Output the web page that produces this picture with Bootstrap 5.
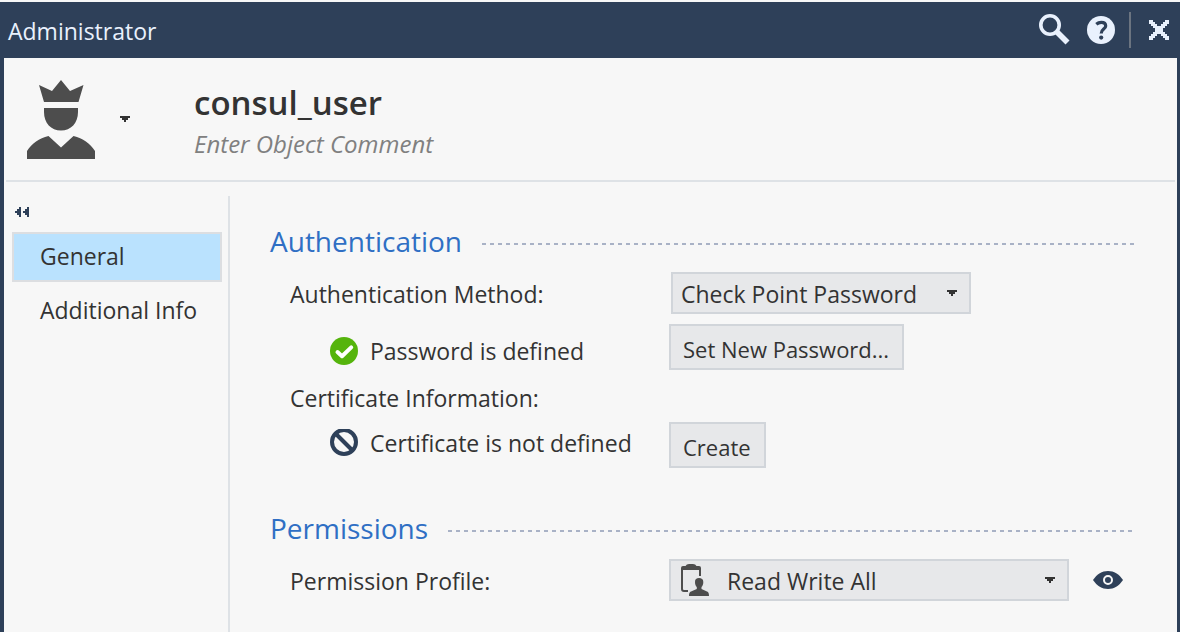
<!DOCTYPE html>
<html lang="en">
<head>
<meta charset="utf-8">
<meta name="viewport" content="width=device-width, initial-scale=1">
<title>Administrator</title>
<link rel="stylesheet" href="https://cdn.jsdelivr.net/npm/bootstrap@5.3.0/dist/css/bootstrap.min.css">
<style>
  :root { --navy: #2e4059; --ink: #333; --line: #dee2e6; --edge: #d1d5da; --surface: #f7f7f7; --field: #e7e8ea; }
  body { font-family: "Open Sans", "Noto Sans", sans-serif; font-size: 23px; line-height: 32px; color: var(--ink); background: var(--surface); }
  .dialog-frame { border: solid var(--navy); border-width: 0 3px 0 4px; margin-top: 2px; min-height: calc(100vh - 2px); }
  .title-bar { background: var(--navy); color: #e9f1fd; height: 56px; padding: 0 8px 0 4px; }
  .title-bar h1 { font-size: 23px; line-height: 32px; font-weight: 400; padding-top: 2px; }
  .title-bar .divider { width: 2px; height: 36px; background: #6b7480; margin: 0 18px 0 14px; }
  .bare { border: 0; padding: 0; background: none; color: inherit; display: flex; }
  svg { display: block; }
  .object-header { height: 122px; padding-left: 23px; }
  .object-header .fields { margin-left: 63px; padding-top: 4px; }
  .object-header input { display: block; width: 100%; border: 0; padding: 0; background: none; outline: 0; color: var(--ink); }
  .object-name { font-size: 33px; line-height: 46px; font-weight: 600; }
  .object-comment { font-size: 24px; line-height: 36px; font-style: italic; }
  .object-comment::placeholder { color: #808080; opacity: 1; }
  .rule { height: 2px; background: var(--line); margin: 0 2px; }
  .dialog-body { padding-top: 14px; }
  .sidebar { width: 226px; padding: 11px 6px 0 8px; border-right: 2px solid var(--line); }
  .sidebar .collapse-btn { margin: 0 0 15px 3px; }
  .sidebar .nav-link { height: 50px; padding: 0 26px 2px; border: 2px solid transparent; border-radius: 0; color: var(--ink); display: flex; align-items: center; margin-bottom: 4px; white-space: nowrap; }
  .sidebar .nav-link.active { background: #bae2fe; border-color: #dcdee1; color: var(--ink); }
  .content { padding: 26px 42px 31px 40px; min-width: 0; }
  .section-title { gap: 20px; margin-bottom: 10px; }
  .section-title h2 { font-size: 28px; line-height: 38px; padding-bottom: 2px; font-weight: 400; color: #2f6fc4; }
  .section-next { margin-top: 41px; }
  .dashes { height: 2px; margin-top: 3px; background: repeating-linear-gradient(90deg, #a9b2c6 0 4px, transparent 4px 8px); }
  .form-grid { display: grid; grid-template-columns: 379px minmax(0, 1fr); margin-left: 20px; align-items: center; }
  .form-grid label { padding-top: 2px; }
  .password-row { margin: 10px 0 12px 20px; }
  .status { padding-left: 40px; gap: 12px; }
  .flat, .form-select.flat { background-color: var(--field); border: 2px solid var(--edge); border-radius: 0; font-size: 23px; line-height: 32px; color: var(--ink); }
  .btn.flat { height: 46px; padding: 4px 13px 0 12px; font-size: 22px; white-space: nowrap; }
  .form-select.flat { height: 42px; padding: 2px 32px 0 8px;
    background-image: url("data:image/svg+xml,%3Csvg xmlns='http://www.w3.org/2000/svg' viewBox='0 0 10 6'%3E%3Cpath d='M0 0h10v2H8v2H6v2H4V4H2V2H0z' fill='%23333'/%3E%3C/svg%3E");
    background-size: 10px 6px; background-position: right 12px center; }
  .method { width: 300px; margin-left: 2px; }
  .profile { width: 400px; }
  .form-select.profile { padding-left: 56px; }
  .profile-icon { position: absolute; left: 12px; top: 5px; pointer-events: none; }
</style>
</head>
<body>
<div class="dialog-frame d-flex flex-column">
  <header class="title-bar d-flex align-items-center">
    <h1 class="mb-0 me-auto">Administrator</h1>
    <button class="bare" type="button" aria-label="Search">
      <svg width="32" height="32" viewBox="0 0 32 32" fill="none" stroke="#e9f1fd"><circle cx="11" cy="11" r="9.2" stroke-width="3.6"/><path d="M17.500 17.500L28.500 28.500" stroke-width="5.6"/></svg>
    </button>
    <button class="bare ms-3" type="button" aria-label="Help">
      <svg width="28" height="28" viewBox="0 0 28 28"><circle cx="14" cy="14" r="14" fill="#e9f1fd"/><path d="M9.3 8.2C11 6.7 12.6 6.3 14.3 6.3C17 6.3 18.7 7.6 18.7 9.9C18.7 13.1 14.2 13.2 14.2 17.4" fill="none" stroke="#2e4059" stroke-width="3.2"/><circle cx="14.2" cy="21.6" r="2.1" fill="#2e4059"/></svg>
    </button>
    <span class="divider"></span>
    <button class="bare" type="button" aria-label="Close">
      <svg width="20" height="20" viewBox="0 0 20 20" fill="#e9f1fd" shape-rendering="crispEdges"><path d="M0 0h4v2h2v2h2v2h4V4h2V2h2V0h4v4h-2v2h-2v2h-2v4h2v2h2v2h2v4h-4v-2h-2v-2h-2v-2H8v2H6v2H4v2H0v-4h2v-2h2v-2h2V8H4V6H2V4H0z"/></svg>
    </button>
  </header>

  <section class="object-header d-flex align-items-center">
    <svg width="68" height="80" viewBox="0 0 68 80" fill="#4d4d4d"><path d="M12 6L25 12L34 1L43 12L56.500 6L51.500 23H17zM17 29H51V33C51 44 44 51.500 34 51.500S17 44 17 33zM21.500 57L34 68.500L46.500 57C56 59.500 63 64 68 72V80H0V72C5 64 12 59.500 21.500 57z"/></svg>
    <button class="bare ms-4" type="button" aria-label="Change icon">
      <svg width="12" height="6" viewBox="0 0 12 6" fill="#333" shape-rendering="crispEdges"><path d="M1 0h10v2H9v2H7v2H5V4H3V2H1z"/></svg>
    </button>
    <div class="fields flex-grow-1">
      <input class="object-name" type="text" value="consul_user" aria-label="Object name">
      <input class="object-comment" type="text" placeholder="Enter Object Comment" aria-label="Object comment">
    </div>
  </section>
  <div class="rule"></div>

  <div class="dialog-body d-flex flex-grow-1">
    <nav class="sidebar flex-shrink-0" aria-label="Pages">
      <button class="bare collapse-btn" type="button" aria-label="Collapse">
        <svg width="14" height="10" viewBox="0 0 14 10" fill="#2e4059" shape-rendering="crispEdges"><path d="M6 0v10H4V8H2V6H0V4h2V2h2V0zM14 0v10h-2V8h-2V6H8V4h2V2h2V0z"/></svg>
      </button>
      <a class="nav-link active" href="#general" aria-current="page">General</a>
      <a class="nav-link" href="#additional">Additional Info</a>
    </nav>

    <main class="content flex-grow-1">
      <div class="section-title d-flex align-items-center">
        <h2 class="mb-0">Authentication</h2>
        <span class="dashes flex-grow-1"></span>
      </div>
      <div class="form-grid">
        <label for="method">Authentication Method:</label>
        <div><select class="form-select flat method" id="method"><option>Check Point Password</option></select></div>
      </div>
      <div class="form-grid password-row">
        <div class="status d-flex align-items-center pt-2">
          <svg width="28" height="28" viewBox="0 0 28 28"><circle cx="14" cy="14" r="14" fill="#55b40c"/><path d="M7.500 15L12 19.200L21.200 10.400" fill="none" stroke="#fff" stroke-width="4" stroke-linecap="round" stroke-linejoin="round"/></svg>
          <span>Password is defined</span>
        </div>
        <div><button class="btn flat" type="button">Set New Password...</button></div>
      </div>
      <div class="form-grid mb-2">
        <span>Certificate Information:</span>
      </div>
      <div class="form-grid">
        <div class="status d-flex align-items-center pb-1">
          <svg width="28" height="28" viewBox="0 0 28 28" fill="none" stroke="#2e4059" stroke-width="4"><circle cx="14" cy="13" r="12"/><path d="M5.500 4.500L22.500 21.500"/></svg>
          <span>Certificate is not defined</span>
        </div>
        <div><button class="btn flat" type="button">Create</button></div>
      </div>

      <div class="section-title section-next d-flex align-items-center">
        <h2 class="mb-0">Permissions</h2>
        <span class="dashes flex-grow-1"></span>
      </div>
      <div class="form-grid">
        <label for="profile">Permission Profile:</label>
        <div class="d-flex align-items-center">
          <div class="position-relative">
            <select class="form-select flat profile" id="profile"><option>Read Write All</option></select>
            <svg class="profile-icon" width="28" height="32" viewBox="0 0 28 32"><path d="M7 27H3Q1 27 1 25V4M19 4V12" fill="none" stroke="#4d4d4d" stroke-width="2"/><path d="M0 6V4Q0 2 2 2H4.500Q5.500 0 8 0H12Q14.500 0 15.500 2H18Q20 2 20 4V6zM14 18C14 15 15.500 14 18 14S22.300 15 22.300 18C22.300 20.500 21.500 22 20.500 23V25L26 27.500C27.500 28.200 28 29 28 32H8C8 29 8.500 28.200 10 27.500L15.800 25V23C14.700 22 14 20.500 14 18z" fill="#4d4d4d"/></svg>
          </div>
          <button class="bare ms-4" type="button" aria-label="View profile">
            <svg width="30" height="18" viewBox="0 0 30 18"><path d="M0 9C4 3 9 0 15 0S26 3 30 9C26 15 21 18 15 18S4 15 0 9z" fill="#2e4059"/><circle cx="15" cy="9" r="4" fill="none" stroke="#f7f7f7" stroke-width="2"/></svg>
          </button>
        </div>
      </div>
    </main>
  </div>
</div>
<script src="https://cdn.jsdelivr.net/npm/bootstrap@5.3.0/dist/js/bootstrap.bundle.min.js"></script>
</body>
</html>
